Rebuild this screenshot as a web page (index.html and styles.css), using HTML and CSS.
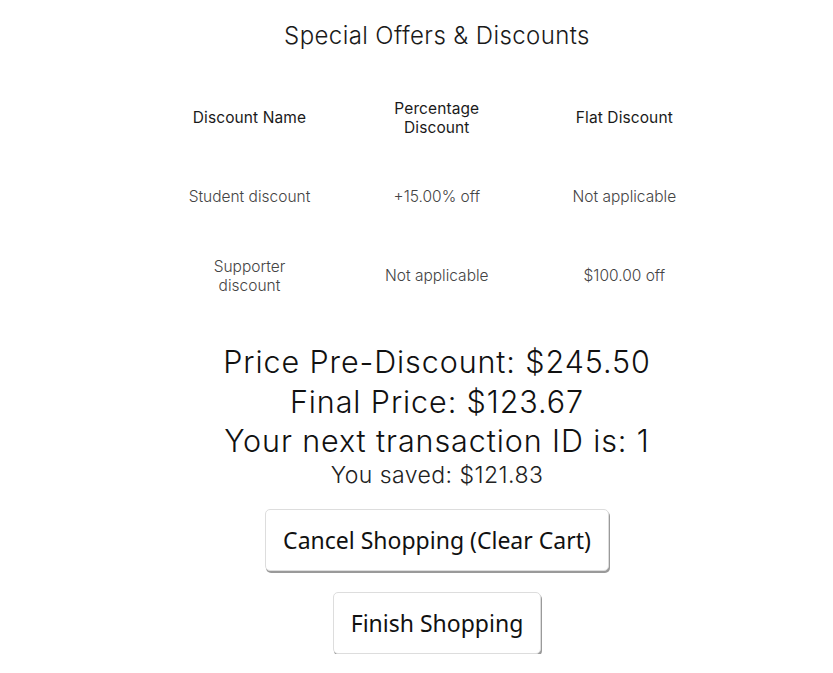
FILE: index.html
```html
<!DOCTYPE html>
<html>
<head>
<meta charset="utf-8">
<link rel="stylesheet" href="styles.css">
</head>
<body>
<main class="page">
  <h1 class="title">Special Offers &amp; Discounts</h1>
  <table class="offers">
    <thead>
      <tr>
        <th>Discount Name</th>
        <th>Percentage<br>Discount</th>
        <th>Flat Discount</th>
      </tr>
    </thead>
    <tbody>
      <tr>
        <td>Student discount</td>
        <td>+15.00% off</td>
        <td>Not applicable</td>
      </tr>
      <tr>
        <td>Supporter<br>discount</td>
        <td>Not applicable</td>
        <td>$100.00 off</td>
      </tr>
    </tbody>
  </table>
  <div class="summary">
    <p class="big">Price Pre-Discount: $245.50</p>
    <p class="big">Final Price: $123.67</p>
    <p class="big">Your next transaction ID is: 1</p>
    <p class="saved">You saved: $121.83</p>
  </div>
  <div class="actions">
    <button class="btn">Cancel Shopping (Clear Cart)</button>
    <button class="btn">Finish Shopping</button>
  </div>
</main>
</body>
</html>
```
FILE: styles.css
```css
html, body { margin: 0; padding: 0; background: #fff; }
body {
  font-family: Inter, "Open Sans", sans-serif;
  font-weight: 300;
  color: #111;
}
.page {
  display: flex;
  flex-direction: column;
  align-items: center;
  padding-left: 41px;
  padding-top: 19px;
}
.title {
  margin: 0;
  font-size: 24px;
  font-weight: 300;
  line-height: 34px;
  letter-spacing: 0.4px;
  color: #1a1a1a;
}
.offers {
  margin-top: 25px;
  border-collapse: collapse;
  width: 561px;
}
.offers th, .offers td {
  width: 187px;
  text-align: center;
  font-size: 15.5px;
  line-height: 19px;
  padding: 0 12px;
  height: 79px;
}
.offers th { font-weight: 380; color: #1a1a1a; letter-spacing: 0.1px; }
.offers td { font-weight: 300; color: #444; }
.summary {
  margin-top: 27px;
  display: flex;
  flex-direction: column;
  align-items: center;
}
.summary p { margin: 0; }
.big {
  font-size: 30.5px;
  line-height: 39.5px;
  letter-spacing: 0.9px;
  color: #111;
}
.saved {
  font-size: 23px;
  line-height: 28px;
  letter-spacing: 0.45px;
  color: #222;
}
.actions {
  margin-top: 20px;
  display: flex;
  flex-direction: column;
  align-items: center;
  gap: 21px;
}
.btn {
  font-family: "Noto Sans", "Open Sans", sans-serif;
  font-size: 23px;
  font-weight: 400;
  color: #111;
  background: #fff;
  border: 1px solid #ddd;
  border-radius: 5px;
  box-shadow: 1px 2px 0 #9a9a9a;
  height: 62px;
  padding: 0 17px;
}
```
